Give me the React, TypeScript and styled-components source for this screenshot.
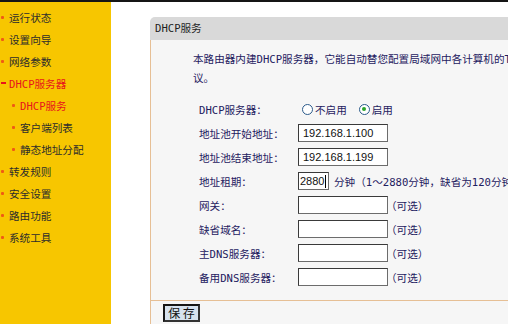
import { Fragment } from "react";
import styled, { createGlobalStyle } from "styled-components";

const GlobalStyle = createGlobalStyle`
	body {
		margin: 0;
		overflow: hidden;
		background: #fff;
		font-family: "DejaVu Sans Mono", "Noto Sans CJK SC", monospace;
		font-size: 10.6px;
	}
`;

/* LAYOUT */

const Page = styled.div`
	display: flex;
	height: 324px;
	border-top: 2px solid #151515;
	box-sizing: border-box;
`;

const Sidebar = styled.nav`
	width: 111px;
	flex-shrink: 0;
	background: #f7c600;
	padding-top: 4px;
`;

const Main = styled.main`
	flex: 1;
	padding: 15px 0 0 39px;
	overflow: hidden;
	display: flex;
	flex-direction: column;
`;

/* MENU */

interface MenuItemProps {
	$sub?: boolean;
	$active?: boolean;
}

const MenuItem = styled.div<MenuItemProps>`
	display: flex;
	align-items: center;
	height: 22px;
	padding-left: ${(props) => (props.$sub ? 12 : 1)}px;
	color: ${(props) => (props.$active ? "#e8141c" : "#2c2c2c")};
	white-space: nowrap;
`;

const Bullet = styled.span<{ $open?: boolean }>`
	display: inline-block;
	width: ${(props) => (props.$open ? 5 : 3)}px;
	height: ${(props) => (props.$open ? 2 : 3)}px;
	margin-right: ${(props) => (props.$open ? 3 : 5)}px;
	background: ${(props) => (props.$open ? "#e8141c" : "#f05a14")};
	border-radius: ${(props) => (props.$open ? 0 : 1)}px;
`;

/* PANEL */

const Panel = styled.section`
	width: 430px;
	flex: 1;
	display: flex;
	flex-direction: column;
`;

const PanelHeader = styled.div`
	height: 23px;
	line-height: 23px;
	background: #d9d9d9;
	border-radius: 5px 0 0 0;
	padding-left: 5px;
	color: #1f1f1f;
`;

const PanelBody = styled.div`
	background: #f6f6f6;
	border-left: 1px solid #e6bf95;
	padding: 10px 0 11px 42px;
	color: #1e2060;
`;

const Intro = styled.p`
	margin: 0 0 9px;
	line-height: 19px;
	white-space: nowrap;
`;

const Form = styled.div`
	display: grid;
	grid-template-columns: 99px auto;
	grid-auto-rows: 24px;
	margin-left: 6px;
	align-items: center;
`;

const Label = styled.div`
	white-space: nowrap;
`;

const Value = styled.div`
	display: flex;
	align-items: center;
	white-space: nowrap;
`;

const Field = styled.div<{ $w: number }>`
	width: ${(props) => props.$w}px;
	height: 18px;
	box-sizing: border-box;
	border: 1px solid #6c6c6c;
	border-top-color: #3a3a3a;
	border-left-color: #3a3a3a;
	background: #fff;
	font-family: "Liberation Sans", Arial, sans-serif;
	font-size: 11px;
	color: #111;
	line-height: 16px;
	display: flex;
	align-items: center;
	padding-left: ${(props) => (props.$w < 40 ? 1 : 4)}px;
`;

const Caret = styled.span`
	display: inline-block;
	width: 1px;
	height: 13px;
	margin-left: 1px;
	background: #000;
`;

const Hint = styled.span<{ $gap?: number }>`
	margin-left: ${(props) => props.$gap ?? -2}px;
`;

const Radio = styled.span<{ $checked?: boolean }>`
	position: relative;
	display: inline-block;
	width: 11px;
	height: 11px;
	box-sizing: border-box;
	border: 1px solid #2a5a8a;
	border-radius: 50%;
	background: #fff;
	margin: 0 2px 0 4px;

	&::after {
		content: "";
		display: ${(props) => (props.$checked ? "block" : "none")};
		position: absolute;
		left: 2.5px;
		top: 2.5px;
		width: 4px;
		height: 4px;
		border-radius: 50%;
		background: #2aa52a;
	}
`;

const RadioGap = styled.span`
	width: 8px;
`;

const PanelFooter = styled.div`
	flex: 1;
	background: #f6f6f6;
	border-left: 1px solid #e6bf95;
	border-top: 1px solid #e6bf95;
	padding: 3px 0 0 12px;
`;

const SaveButton = styled.button`
	width: 37px;
	height: 18px;
	padding: 0;
	border: 2px solid #161616;
	border-right-color: #333;
	border-bottom-color: #333;
	background: #d6e2ee;
	font-family: "Noto Sans CJK SC", sans-serif;
	font-size: 12px;
	line-height: 14px;
	color: #111;
`;

const menu = [
	{ label: "运行状态" },
	{ label: "设置向导" },
	{ label: "网络参数" },
	{ label: "DHCP服务器", active: true, open: true },
	{ label: "DHCP服务", active: true, sub: true },
	{ label: "客户端列表", sub: true },
	{ label: "静态地址分配", sub: true },
	{ label: "转发规则" },
	{ label: "安全设置" },
	{ label: "路由功能" },
	{ label: "系统工具" },
];

const optional = ["网关：", "缺省域名：", "主DNS服务器：", "备用DNS服务器："];

export default function App() {
	return (
		<>
			<GlobalStyle />
			<Page>
				<Sidebar>
					{menu.map((item) => (
						<MenuItem key={item.label} $sub={item.sub} $active={item.active}>
							<Bullet $open={item.open} />
							{item.label}
						</MenuItem>
					))}
				</Sidebar>
				<Main>
					<Panel>
						<PanelHeader>DHCP服务</PanelHeader>
						<PanelBody>
							<Intro>
								本路由器内建DHCP服务器，它能自动替您配置局域网中各计算机的TCP/IP协
								<br />
								议。
							</Intro>
							<Form>
								<Label>DHCP服务器：</Label>
								<Value>
									<Radio />
									不启用
									<RadioGap />
									<Radio $checked />
									启用
								</Value>
								<Label>地址池开始地址：</Label>
								<Value>
									<Field $w={90}>192.168.1.100</Field>
								</Value>
								<Label>地址池结束地址：</Label>
								<Value>
									<Field $w={90}>192.168.1.199</Field>
								</Value>
								<Label>地址租期：</Label>
								<Value>
									<Field $w={31}>
										2880
										<Caret />
									</Field>
									<Hint $gap={5}>分钟（1～2880分钟，缺省为120分钟）</Hint>
								</Value>
								{optional.map((label) => (
									<Fragment key={label}>
										<Label>{label}</Label>
										<Value>
											<Field $w={90} />
											<Hint>（可选）</Hint>
										</Value>
									</Fragment>
								))}
							</Form>
						</PanelBody>
						<PanelFooter>
							<SaveButton>保 存</SaveButton>
						</PanelFooter>
					</Panel>
				</Main>
			</Page>
		</>
	);
}
